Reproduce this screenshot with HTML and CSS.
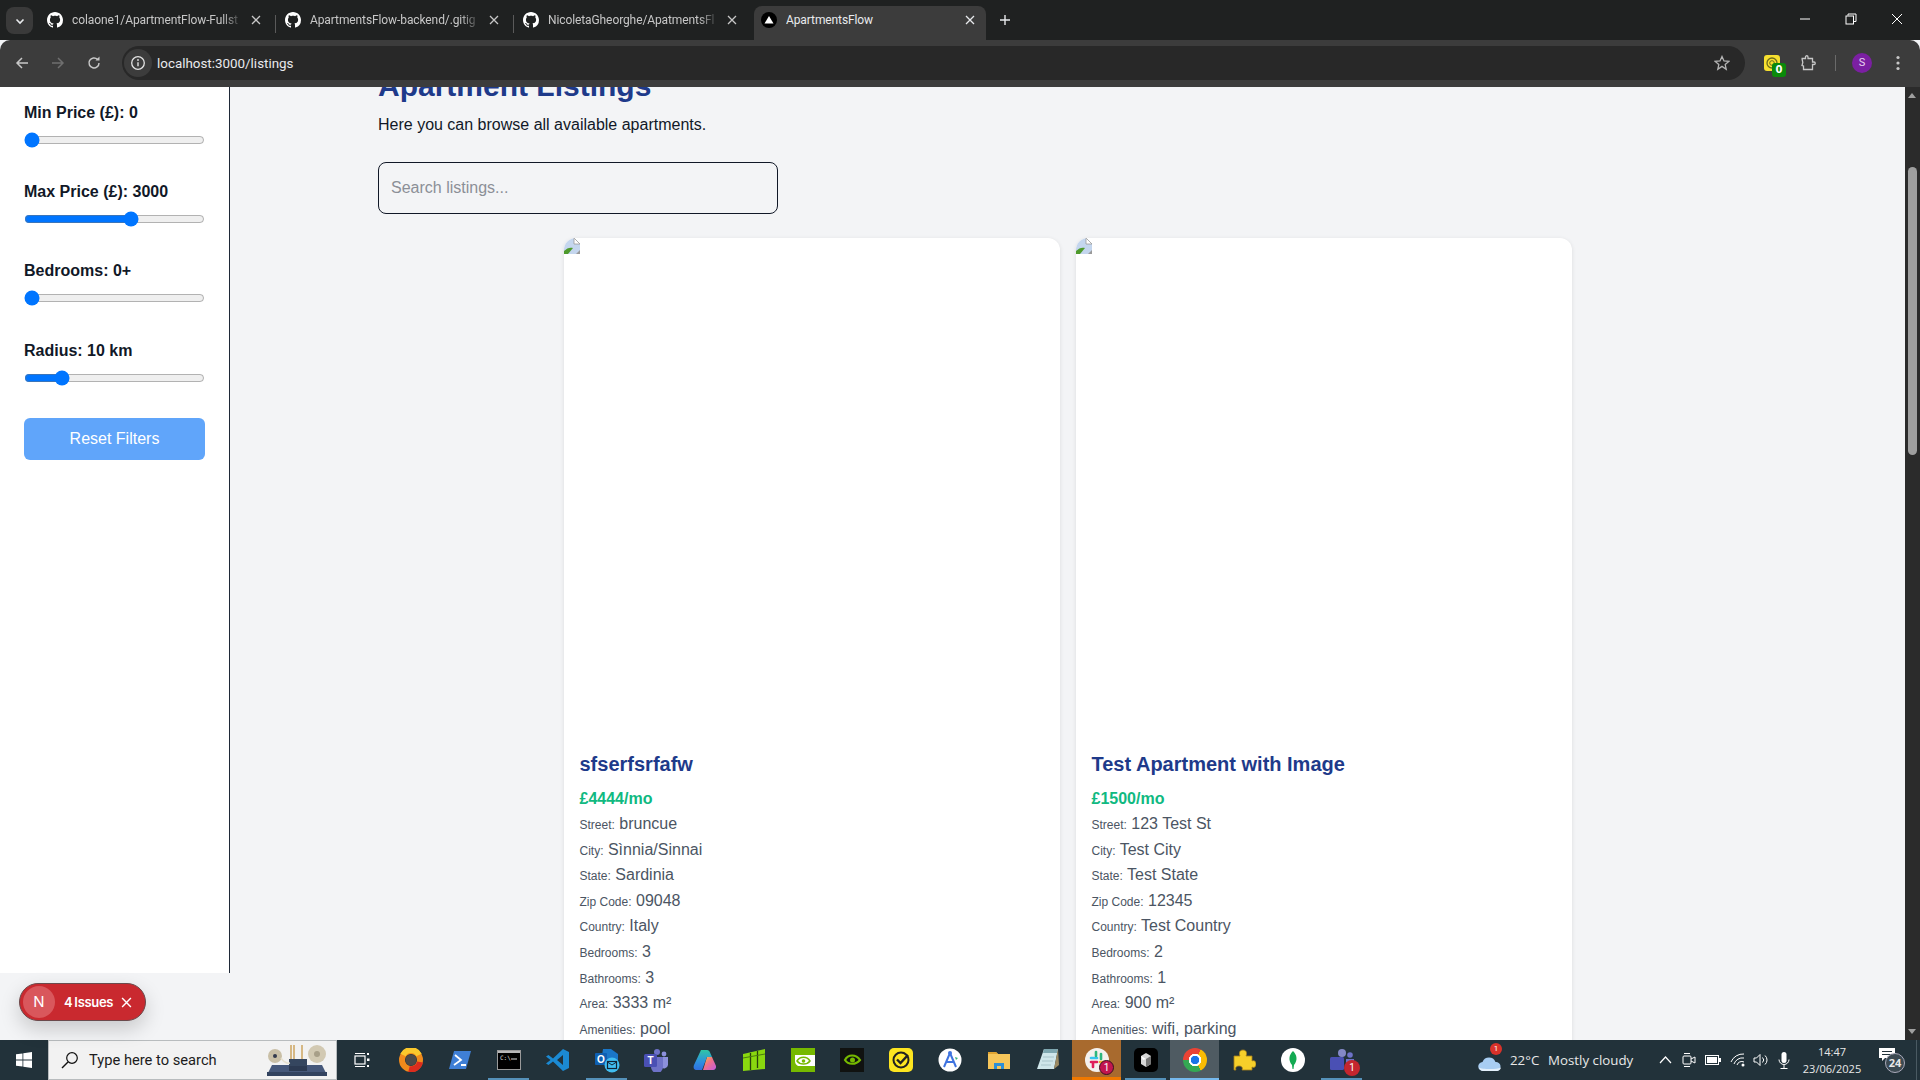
FILE: index.html
```html
<!DOCTYPE html>
<html lang="en">
<head>
    <meta charset="UTF-8">
    <title>ApartmentsFlow</title>
    <link rel="stylesheet" href="styles.css">
</head>
<body>
    <svg class="defs" width="0" height="0">
        <defs>
            <linearGradient id="copilot-a" x1="0" y1="0" x2="0" y2="1"><stop offset="0" stop-color="#2fc6a4"/><stop offset=".6" stop-color="#2d8fe0"/><stop offset="1" stop-color="#2f6fe0"/></linearGradient>
            <linearGradient id="copilot-b" x1="0" y1="0" x2="1" y2="1"><stop offset="0" stop-color="#f6c23c"/><stop offset=".45" stop-color="#f0708a"/><stop offset="1" stop-color="#c05be0"/></linearGradient>
        </defs>
        <symbol id="gh" viewBox="0 0 16 16"><path fill="#fff" d="M8 0C3.58 0 0 3.58 0 8c0 3.54 2.29 6.53 5.47 7.59.4.07.55-.17.55-.38 0-.19-.01-.82-.01-1.49-2.01.37-2.53-.49-2.69-.94-.09-.23-.48-.94-.82-1.13-.28-.15-.68-.52-.01-.53.63-.01 1.08.58 1.23.82.72 1.21 1.87.87 2.33.66.07-.52.28-.87.51-1.07-1.78-.2-3.64-.89-3.64-3.95 0-.87.31-1.59.82-2.15-.08-.2-.36-1.02.08-2.12 0 0 .67-.21 2.2.82.64-.18 1.32-.27 2-.27.68 0 1.36.09 2 .27 1.53-1.04 2.2-.82 2.2-.82.44 1.1.16 1.92.08 2.12.51.56.82 1.27.82 2.15 0 3.07-1.87 3.75-3.65 3.95.29.25.54.73.54 1.48 0 1.07-.01 1.93-.01 2.2 0 .21.15.46.55.38A8.013 8.013 0 0016 8c0-4.42-3.58-8-8-8z"/></symbol>
        <symbol id="x" viewBox="0 0 10 10"><path d="M1 1l8 8M9 1l-8 8" stroke="currentColor" stroke-width="1.3" fill="none"/></symbol>
        <symbol id="broken" viewBox="0 0 16 16">
            <path d="M0 0h10l6 6v10H0z" fill="#c4d6ee"/>
            <path d="M10 0l6 6h-6z" fill="#fff" stroke="#9a9a9a" stroke-width=".8"/>
            <path d="M0 16v-3c3-3 6-4 9-3l-5 6z" fill="#4e9a2c"/>
            <path d="M12 16l4-4v4z" fill="#9a9a9a"/>
        </symbol>
    </svg>

    <div class="tabstrip">
        <button class="tab-search"><svg width="10" height="10" viewBox="0 0 10 10"><path d="M1.5 3.5L5 7l3.5-3.5" stroke="#e8eaed" stroke-width="1.6" fill="none"/></svg></button>
        <div class="tabs">
            <div class="tab">
                <svg class="favicon"><use href="#gh"/></svg>
                <span class="tab-title">colaone1/ApartmentFlow-Fullst</span>
                <svg class="tab-close"><use href="#x"/></svg>
            </div>
            <div class="tab">
                <svg class="favicon"><use href="#gh"/></svg>
                <span class="tab-title">ApartmentsFlow-backend/.gitig</span>
                <svg class="tab-close"><use href="#x"/></svg>
            </div>
            <div class="tab tab-last">
                <svg class="favicon"><use href="#gh"/></svg>
                <span class="tab-title">NicoletaGheorghe/ApatmentsFl</span>
                <svg class="tab-close"><use href="#x"/></svg>
            </div>
            <div class="tab tab-active">
                <svg class="favicon" viewBox="0 0 16 16"><circle cx="8" cy="8" r="8" fill="#000"/><path d="M8 4l4.5 7.5h-9z" fill="#fff"/></svg>
                <span class="tab-title">ApartmentsFlow</span>
                <svg class="tab-close"><use href="#x"/></svg>
            </div>
            <svg class="new-tab" width="12" height="12" viewBox="0 0 12 12"><path d="M6 1v10M1 6h10" stroke="#e8eaed" stroke-width="1.4"/></svg>
        </div>
        <div class="window-controls">
            <svg width="12" height="12" viewBox="0 0 12 12"><path d="M1 6h10" stroke="#fff" stroke-width="1"/></svg>
            <svg width="12" height="12" viewBox="0 0 12 12"><path d="M3 2.5V1h8v7.5H9" stroke="#fff" fill="none"/><rect x="1" y="3" width="7.5" height="8" fill="none" stroke="#fff"/></svg>
            <svg width="12" height="12" viewBox="0 0 12 12"><path d="M1 1l10 10M11 1L1 11" stroke="#fff" stroke-width="1"/></svg>
        </div>
    </div>

    <div class="toolbar">
        <div class="nav-buttons">
            <svg width="16" height="16" viewBox="0 0 16 16"><path d="M14 8H3M8 3L3 8l5 5" stroke="#c7c7c7" stroke-width="1.5" fill="none"/></svg>
            <svg width="16" height="16" viewBox="0 0 16 16"><path d="M2 8h11M8 3l5 5-5 5" stroke="#6f6f6f" stroke-width="1.5" fill="none"/></svg>
            <svg width="16" height="16" viewBox="0 0 16 16"><path d="M13 8a5 5 0 1 1-1.5-3.6" stroke="#c7c7c7" stroke-width="1.5" fill="none"/><path d="M13.5 1.5v4h-4z" fill="#c7c7c7"/></svg>
        </div>
        <div class="omnibox">
            <span class="site-info"><svg width="16" height="16" viewBox="0 0 16 16"><circle cx="8" cy="8" r="6.3" stroke="#e3e3e3" stroke-width="1.3" fill="none"/><path d="M8 7.2v4" stroke="#e3e3e3" stroke-width="1.4"/><circle cx="8" cy="5" r=".9" fill="#e3e3e3"/></svg></span>
            <span class="url">localhost:3000/listings</span>
            <svg class="star" width="16" height="16" viewBox="0 0 16 16"><path d="M8 1.5l2 4.4 4.8.5-3.6 3.2 1 4.7L8 11.4l-4.2 2.9 1-4.7L1.2 6.4l4.8-.5z" stroke="#b5b5b5" stroke-width="1.3" fill="none"/></svg>
        </div>
        <div class="toolbar-actions">
            <span class="ext">
                <svg width="16" height="16" viewBox="0 0 16 16"><rect width="16" height="16" rx="3" fill="#f7e02f"/><circle cx="8" cy="8" r="5" fill="none" stroke="#6d6a1c" stroke-width="1.3"/><circle cx="8" cy="8" r="2.3" fill="none" stroke="#6d6a1c"/></svg>
                <span class="ext-badge">0</span>
            </span>
            <svg class="puzzle" width="16" height="16" viewBox="0 0 16 16"><path d="M1.5 3.5h4V2a1.2 1.2 0 0 1 2.500 0v1.500h4.500V7H14a1.2 1.2 0 0 1 0 2.500h-1.500v5h-9V11l-1.500-.5.8-3-.8-4z" stroke="#c7c7c7" stroke-width="1.3" fill="none"/></svg>
            <span class="toolbar-sep"></span>
            <span class="avatar">S</span>
            <svg class="kebab" width="4" height="16" viewBox="0 0 4 16"><circle cx="2" cy="2.5" r="1.6" fill="#c7c7c7"/><circle cx="2" cy="8" r="1.6" fill="#c7c7c7"/><circle cx="2" cy="13.5" r="1.6" fill="#c7c7c7"/></svg>
        </div>
    </div>

    <div class="viewport">
        <div class="page">
            <aside class="sidebar">
                <div class="filter">
                    <label class="filter-label">Min Price (£): 0</label>
                    <input type="range" min="0" max="5000" value="0">
                </div>
                <div class="filter">
                    <label class="filter-label">Max Price (£): 3000</label>
                    <input type="range" min="0" max="5000" value="3000">
                </div>
                <div class="filter">
                    <label class="filter-label">Bedrooms: 0+</label>
                    <input type="range" min="0" max="10" value="0">
                </div>
                <div class="filter">
                    <label class="filter-label">Radius: 10 km</label>
                    <input type="range" min="1" max="50" value="10">
                </div>
                <button class="reset-btn">Reset Filters</button>
            </aside>

            <main class="main">
                <h1>Apartment Listings</h1>
                <p class="lead">Here you can browse all available apartments.</p>
                <input class="search" type="text" placeholder="Search listings...">

                <div class="cards">
                    <article class="card">
                        <div class="card-img"><svg class="broken" width="16" height="16"><use href="#broken"/></svg></div>
                        <div class="card-body">
                            <h2>sfserfsrfafw</h2>
                            <div class="price">£4444/mo</div>
                            <p class="row"><span>Street:</span> bruncue</p>
                            <p class="row"><span>City:</span> Sìnnia/Sinnai</p>
                            <p class="row"><span>State:</span> Sardinia</p>
                            <p class="row"><span>Zip Code:</span> 09048</p>
                            <p class="row"><span>Country:</span> Italy</p>
                            <p class="row"><span>Bedrooms:</span> 3</p>
                            <p class="row"><span>Bathrooms:</span> 3</p>
                            <p class="row"><span>Area:</span> 3333 m²</p>
                            <p class="row"><span>Amenities:</span> pool</p>
                        </div>
                    </article>
                    <article class="card">
                        <div class="card-img"><svg class="broken" width="16" height="16"><use href="#broken"/></svg></div>
                        <div class="card-body">
                            <h2>Test Apartment with Image</h2>
                            <div class="price">£1500/mo</div>
                            <p class="row"><span>Street:</span> 123 Test St</p>
                            <p class="row"><span>City:</span> Test City</p>
                            <p class="row"><span>State:</span> Test State</p>
                            <p class="row"><span>Zip Code:</span> 12345</p>
                            <p class="row"><span>Country:</span> Test Country</p>
                            <p class="row"><span>Bedrooms:</span> 2</p>
                            <p class="row"><span>Bathrooms:</span> 1</p>
                            <p class="row"><span>Area:</span> 900 m²</p>
                            <p class="row"><span>Amenities:</span> wifi, parking</p>
                        </div>
                    </article>
                </div>
            </main>

            <div class="issues-pill">
                <span class="next-logo">N</span>
                <span class="issues-text">4 Issues</span>
                <svg width="11" height="11"><use href="#x"/></svg>
            </div>
        </div>

        <div class="scrollbar">
            <span class="arrow-up"></span>
            <span class="thumb"></span>
            <span class="arrow-down"></span>
        </div>
    </div>

    <footer class="taskbar">
        <div class="start">
            <svg width="16" height="16" viewBox="0 0 16 16"><path fill="#fff" d="M0 2.3l6.5-.9v6.200H0zM7.3 1.300L16 0v7.600H7.3zM0 8.400h6.500v6.200L0 13.700zM7.3 8.400H16V16l-8.700-1.200z"/></svg>
        </div>
        <div class="task-search">
            <svg width="18" height="18" viewBox="0 0 18 18"><circle cx="11" cy="7" r="5.3" fill="none" stroke="#111" stroke-width="1.2"/><path d="M7 11l-6 6" stroke="#111" stroke-width="1.4"/></svg>
            <span class="task-search-text">Type here to search</span>
            <svg class="machine" width="60" height="32" viewBox="0 0 60 32">
                <path d="M0 31l5-10h50l5 10z" fill="#46587a"/>
                <rect x="0" y="28" width="60" height="4" fill="#33435f"/>
                <rect x="22" y="15" width="18" height="7" fill="#35465f"/>
                <rect x="22" y="22" width="18" height="5" fill="#2c3a52"/>
                <path d="M24 15V1M27 15V1M35 15V1" stroke="#d6b884" stroke-width="2"/>
                <circle cx="8" cy="12" r="7" fill="#c9bfa6"/><circle cx="8" cy="12" r="2" fill="#333a4d"/>
                <circle cx="50" cy="10" r="9" fill="#d2c9b2"/><circle cx="50" cy="10" r="3" fill="#a89f88"/>
                <path d="M14 14q4 6 9 5" stroke="#e6e0cf" stroke-width="1.5" fill="none"/>
            </svg>
        </div>
        <div class="task-icons">
            <span class="tb-item"><svg width="16" height="16" viewBox="0 0 16 16"><rect x="1" y="4" width="10" height="8" fill="none" stroke="#fff" stroke-width="1.2"/><path d="M1 1.500h10M1 14.500h10" stroke="#fff" stroke-width="1.2"/><rect x="13" y="1" width="2" height="2" fill="#fff"/><rect x="13" y="6.500" width="2.500" height="2.500" fill="#fff"/><rect x="13" y="13" width="2" height="2" fill="#fff"/></svg></span>
            <span class="tb-item"><svg width="24" height="24" viewBox="0 0 24 24"><circle cx="12" cy="12" r="9" fill="none" stroke="#f08a1c" stroke-width="6"/><path d="M4 7a9 9 0 0 1 16 0" fill="none" stroke="#fbc82c" stroke-width="6"/><path d="M10 21a9 9 0 0 0 11-7" fill="none" stroke="#dc2c1e" stroke-width="6"/><circle cx="12" cy="12" r="5.500" fill="#4d4a48"/></svg></span>
            <span class="tb-item"><svg width="24" height="24" viewBox="0 0 24 24"><path d="M6 3h17l-5 18H1z" fill="#3f7fd6"/><path d="M7 7l6 5-7 5M13 17h5" stroke="#fff" stroke-width="1.800" fill="none"/></svg></span>
            <span class="tb-item running"><svg width="24" height="20" viewBox="0 0 24 20"><rect x=".5" y=".5" width="23" height="19" fill="#000" stroke="#9a9a9a"/><rect x="1" y="1" width="22" height="2" fill="#b9b9b9"/><text x="3" y="10" class="cmd-text">C:\</text><path d="M14 9h6" stroke="#ddd"/></svg></span>
            <span class="tb-item"><svg width="24" height="24" viewBox="0 0 24 24"><path d="M17 1l6 3v16l-6 3-10-9.500L2.500 17 0 15.500 4.500 12 0 8.500 2.500 7 7 10.500zM17 7l-6 5 6 5z" fill="#1b8ad3"/></svg></span>
            <span class="tb-item running"><svg width="26" height="26" viewBox="0 0 26 26"><path d="M9 2h8l7 5v8H7z" fill="#1a76c7"/><rect x="1" y="6" width="12" height="12" rx="1" fill="#0f5fb1"/><text x="7" y="15.500" class="icon-letter">O</text><circle cx="18" cy="18" r="7.500" fill="#41bdf0"/><rect x="13.500" y="14.500" width="9" height="7" fill="none" stroke="#123" stroke-width="1.200"/><path d="M13.500 15l4.500 3 4.500-3" stroke="#123" fill="none"/></svg></span>
            <span class="tb-item"><svg width="26" height="24" viewBox="0 0 26 24"><circle cx="14" cy="4" r="3" fill="#6e72c8"/><circle cx="21" cy="6" r="2.400" fill="#8c90dc"/><path d="M18 9h7v8a4 4 0 0 1-7 2z" fill="#8c90dc"/><path d="M8 9h12v10a5 5 0 0 1-12 0z" fill="#6e72c8"/><rect x="1" y="6" width="13" height="13" rx="1.500" fill="#4a50b4"/><text x="7.500" y="16" class="icon-letter">T</text></svg></span>
            <span class="tb-item"><svg width="24" height="24" viewBox="0 0 24 24"><path d="M14 9h5l4 9c.5 2-1 4-3 4H10z" fill="url(#copilot-b)"/><path d="M8 2h6c1.500 0 2.500 1 3 2.500L19 9h-5l-5 13H4c-3 0-4-2-3-5z" fill="url(#copilot-a)"/></svg></span>
            <span class="tb-item"><svg width="24" height="24" viewBox="0 0 24 24"><path d="M1 6l22-5v20L1 23z" fill="#8ad80f"/><path d="M8.500 5v17M15.500 3v17" stroke="#28430c" stroke-width="1.300"/><path d="M1 10l22-4" stroke="#4c7a10" stroke-width="1"/></svg></span>
            <span class="tb-item"><svg width="24" height="24" viewBox="0 0 24 24"><rect width="24" height="24" fill="#76b900"/><path d="M4 7h20v11H7c-2-1-3-3-3-5z" fill="#fff"/><path d="M6 13c3-5 10-5 13 0-3 4-10 4-13 0z" fill="none" stroke="#76b900" stroke-width="1.500"/><circle cx="12.500" cy="13" r="1.800" fill="#76b900"/></svg></span>
            <span class="tb-item"><svg width="24" height="24" viewBox="0 0 24 24"><rect width="24" height="24" fill="#101210"/><path d="M5 12c3-6 11-6 15 0-4 5-12 5-15 0z" fill="none" stroke="#76b900" stroke-width="2.200"/><circle cx="12.500" cy="12" r="2.500" fill="#76b900"/></svg></span>
            <span class="tb-item"><svg width="24" height="24" viewBox="0 0 24 24"><rect width="24" height="24" rx="5" fill="#fde520"/><circle cx="12" cy="12" r="7.500" fill="none" stroke="#222" stroke-width="2"/><path d="M8 11.500l3.500 3.500L19 7" fill="none" stroke="#222" stroke-width="2.400"/></svg></span>
            <span class="tb-item"><svg width="24" height="24" viewBox="0 0 24 24"><circle cx="12" cy="12" r="11.500" fill="#fff"/><path d="M12 5l-6 14M12 5l6 14M8 14h8" stroke="#3f74e0" stroke-width="2" fill="none"/><circle cx="12" cy="5" r="2" fill="#3f74e0"/><path d="M17 9l3 1-2 2z" fill="#3ab47a"/></svg></span>
            <span class="tb-item"><svg width="24" height="22" viewBox="0 0 24 22"><path d="M1 3h8l2 2h12v15H1z" fill="#f6c65a"/><path d="M1 3h8l2 2H1z" fill="#e0a431"/><path d="M7 20v-6h10v6h-3v-3h-4v3z" fill="#2d8fd6"/></svg></span>
            <span class="tb-item"><svg width="24" height="24" viewBox="0 0 24 24"><path d="M8 1h14l-4 20H1z" fill="#cfe6ea"/><path d="M8 1h14l-1 4H7z" fill="#7ea7b0"/><path d="M7 9h11M6 13h11M5 17h10" stroke="#a8c4ca"/><path d="M18 21l4-20 1 16z" fill="#9b8a63"/></svg></span>
            <span class="tb-item tb-slack"><svg width="24" height="24" viewBox="0 0 24 24"><circle cx="12" cy="12" r="12" fill="#f4f1ee"/><path d="M6 10h6" stroke="#36c5f0" stroke-width="2.600" stroke-linecap="round"/><path d="M11 4v4" stroke="#2eb67d" stroke-width="2.600" stroke-linecap="round"/><path d="M16 6v5" stroke="#2eb67d" stroke-width="2.600" stroke-linecap="round"/><path d="M8 15v4" stroke="#e01e5a" stroke-width="2.600" stroke-linecap="round"/><path d="M6 14h6" stroke="#e01e5a" stroke-width="2.600" stroke-linecap="round"/><path d="M15 14h4" stroke="#ecb22e" stroke-width="2.600" stroke-linecap="round"/></svg><span class="tb-badge badge-slack">1</span></span>
            <span class="tb-item running"><svg width="24" height="24" viewBox="0 0 24 24"><rect width="24" height="24" rx="5" fill="#000"/><path d="M7 8l5-3 5 3v8l-5 3-5-3z" fill="#d8d8d8"/><path d="M12 11l5-3v8l-5 3z" fill="#777"/><path d="M7 8l5 3-3 1z" fill="#fff"/></svg></span>
            <span class="tb-item tb-chrome running"><span class="chrome-icon"></span></span>
            <span class="tb-item"><svg width="24" height="24" viewBox="0 0 24 24"><path d="M2 8h6c-1-2-1-6 3-6s4 4 3 6h6v5c2-1 4 0 4 3s-2 4-4 3v3H10c1-2 0-4-3-4s-4 2-3 4H2z" fill="#f6cf2a" stroke="#a8821a" stroke-width=".8"/></svg></span>
            <span class="tb-item"><svg width="24" height="24" viewBox="0 0 24 24"><circle cx="12" cy="12" r="12" fill="#fff"/><path d="M12 3c4 4 5 9 1 14l-.5 4h-1l-.5-4C7 12 8 7 12 3z" fill="#13aa52"/></svg></span>
            <span class="tb-item running"><svg width="26" height="24" viewBox="0 0 26 24"><circle cx="13" cy="5" r="4" fill="#8489c8"/><circle cx="21" cy="7" r="2.800" fill="#6e72c8"/><path d="M17 11h8v7a4 4 0 0 1-8 1z" fill="#6e72c8"/><rect x="1" y="9" width="14" height="13" rx="1.500" fill="#4a50b4"/></svg><span class="tb-badge badge-teams">1</span></span>
        </div>
        <div class="tray">
            <span class="weather">
                <svg width="24" height="20" viewBox="0 0 24 20"><path d="M5 19a4.500 4.500 0 0 1-.5-9 7 7 0 0 1 13 0 4.500 4.500 0 0 1 1 9z" fill="#a8cdf2"/><path d="M1 15.500c3 2 18 2 22 0-.5 2-2 3.500-4 3.500H5c-2 0-3.500-1.500-4-3.500z" fill="#e4f0fb"/></svg>
                <span class="weather-badge">1</span>
            </span>
            <span class="weather-temp">22°C</span>
            <span class="weather-text">Mostly cloudy</span>
            <svg class="tray-ico chevron" width="13" height="8" viewBox="0 0 13 8"><path d="M1 7l5.500-6L12 7" stroke="#fff" stroke-width="1.200" fill="none"/></svg>
            <svg class="tray-ico cam" width="14" height="16" viewBox="0 0 14 16"><rect x="1" y="4" width="8" height="8" rx="1" fill="none" stroke="#fff"/><path d="M9 7l4-2v6l-4-2M2 1.500h6M2 14.500h6" stroke="#fff" fill="none"/></svg>
            <svg class="tray-ico" width="16" height="10" viewBox="0 0 16 10"><rect x=".5" y=".5" width="13" height="9" fill="none" stroke="#fff"/><rect x="2" y="2" width="10" height="6" fill="#fff"/><rect x="14" y="3" width="2" height="4" fill="#fff"/></svg>
            <svg class="tray-ico speaker-gap" width="16" height="14" viewBox="0 0 16 14"><path d="M1 9a13 13 0 0 1 13-8M4 11a9 9 0 0 1 10-6M7 12a5 5 0 0 1 7-3" stroke="#fff" fill="none"/><circle cx="13" cy="12" r="1.500" fill="#fff"/></svg>
            <svg class="tray-ico speaker" width="16" height="14" viewBox="0 0 16 14"><path d="M1 5h2.500L7 1.500v11L3.500 9H1z" fill="none" stroke="#fff"/><path d="M9.500 4.500a3.500 3.500 0 0 1 0 5M12 2.500a6 6 0 0 1 0 9" fill="none" stroke="#fff"/></svg>
            <svg class="tray-ico mic" width="12" height="17" viewBox="0 0 12 17"><rect x="3.500" y="0" width="5" height="11" rx="2.500" fill="#fff"/><path d="M1 7.500a5 5 0 0 0 10 0M6 13v3M2.500 16.500h7" stroke="#fff" fill="none"/></svg>
            <div class="clock">
                <span>14:47</span>
                <span>23/06/2025</span>
            </div>
            <span class="notif">
                <svg width="16" height="14" viewBox="0 0 16 14"><path d="M0 0h16v10H6l-3 3v-3H0z" fill="#fff"/><path d="M3 3.500h10M3 6.500h10" stroke="#22323a"/></svg>
                <span class="notif-count">24</span>
            </span>
        </div>
    </footer>
</body>
</html>
```

FILE: styles.css
```css
* { box-sizing: border-box; }

body {
    margin: 0;
    height: 100vh;
    display: flex;
    flex-direction: column;
    overflow: hidden;
    font-family: "Liberation Sans", Arial, sans-serif;
    background: #f3f4f6;
    color: #111827;
}
.defs { position: absolute; }

/* browser chrome */
.tabstrip {
    height: 40px;
    flex: none;
    display: flex;
    background: #1f2121;
    font-family: Roboto, sans-serif;
    font-size: 12px;
    letter-spacing: -0.1px;
    color: #c7c7c7;
}
.tab-search {
    width: 27px;
    height: 27px;
    margin: 7px 7px 0 6px;
    padding: 0;
    border: none;
    border-radius: 8px;
    background: #3a3a3a;
    display: flex;
    align-items: center;
    justify-content: center;
}
.tabs {
    flex: 1;
    display: flex;
    gap: 6px;
    align-items: flex-end;
}
.tab {
    position: relative;
    width: 232px;
    height: 34px;
    display: flex;
    align-items: center;
    padding: 0 10px 6px 7px;
}
.tab::after {
    content: "";
    position: absolute;
    right: -4px;
    top: 9px;
    height: 18px;
    width: 1px;
    background: #5a5a5a;
}
.tab-last::after, .tab-active::after { display: none; }
.favicon { width: 16px; height: 16px; flex: none; }
.tab-title {
    width: 171px;
    margin-left: 9px;
    white-space: nowrap;
    overflow: hidden;
    -webkit-mask-image: linear-gradient(to right, #000 88%, transparent 100%);
}
.tab-close { width: 10px; height: 10px; flex: none; margin-left: 8px; color: #c7c7c7; }
.tab-active {
    background: #3c3c3c;
    border-radius: 8px 8px 0 0;
    color: #e8eaed;
}
.tab-active .tab-title { -webkit-mask-image: none; }
.tab-active .tab-close { color: #e8eaed; }
.new-tab { margin: 0 0 14px 7px; }
.window-controls {
    display: flex;
    align-items: center;
    height: 38px;
}
.window-controls svg { margin: 0 17px; }

.toolbar {
    height: 47px;
    flex: none;
    display: flex;
    align-items: flex-start;
    background: #3c3c3c;
    border-radius: 10px 10px 0 0;
    padding-top: 6px;
}
.nav-buttons {
    display: flex;
    gap: 20px;
    padding: 9px 0 0 14px;
    width: 122px;
}
.omnibox {
    width: 1623px;
    height: 34px;
    display: flex;
    align-items: center;
    background: #282828;
    border-radius: 17px;
    font-family: Roboto, sans-serif;
    font-size: 13.4px;
    color: #e8eaed;
    padding: 0 15px 0 2px;
}
.site-info {
    width: 28px;
    height: 28px;
    border-radius: 50%;
    background: #3c3c3c;
    display: flex;
    align-items: center;
    justify-content: center;
}
.url { margin-left: 5px; flex: 1; }
.toolbar-actions {
    flex: 1;
    display: flex;
    align-items: center;
    height: 34px;
    padding-left: 19px;
}
.ext { position: relative; width: 16px; height: 16px; }
.ext-badge {
    position: absolute;
    left: 8px;
    top: 8px;
    width: 14px;
    height: 14px;
    border-radius: 3px;
    background: #0a8a0a;
    color: #fff;
    font: bold 10px/14px "DejaVu Sans", sans-serif;
    text-align: center;
}
.ext svg { display: block; }
.puzzle { margin-left: 20px; }
.toolbar-sep { width: 1px; height: 16px; background: #6a6a6a; margin-left: 19px; }
.avatar {
    width: 20px;
    height: 20px;
    margin-left: 16px;
    border-radius: 50%;
    background: #7b1fa2;
    color: #e8d4f0;
    font: 11px/20px Roboto, sans-serif;
    text-align: center;
}
.kebab { margin-left: 24px; }

/* page area */
.viewport {
    flex: 1;
    min-height: 0;
    display: flex;
}
.page {
    position: relative;
    flex: 1;
    min-width: 0;
    display: flex;
    background: #f3f4f6;
}
.sidebar {
    width: 230px;
    flex: none;
    height: 886px;
    padding: 14px 24px 0;
    background: #fff;
    border-right: 1px solid #1f2937;
}
.filter { margin-bottom: 32.2px; }
.filter-label {
    display: block;
    font-size: 16px;
    font-weight: bold;
    line-height: 24px;
    margin-bottom: 7px;
}
.filter input {
    display: block;
    width: 181px;
    margin: 2px 0;
}
.reset-btn {
    width: 181px;
    height: 42px;
    border: none;
    border-radius: 6px;
    background: #60a5fa;
    color: #fff;
    font: 16px "Liberation Sans", Arial, sans-serif;
}

.main {
    flex: 1;
    min-width: 0;
    padding: 0 148px;
    overflow: hidden;
}
.main h1 {
    margin: -19px 0 9px;
    font-size: 30px;
    line-height: 36px;
    color: #1e3a8a;
}
.lead {
    margin: 0 0 25px;
    font-size: 16px;
    line-height: 24px;
}
.search {
    display: block;
    width: 400px;
    height: 52px;
    margin-bottom: 24px;
    padding: 0 12px;
    border: 1px solid #111827;
    border-radius: 8px;
    background: transparent;
    font: 16px "Liberation Sans", Arial, sans-serif;
}
.search::placeholder { color: #8b8f97; }
.cards {
    display: flex;
    justify-content: center;
    gap: 16px;
    margin: 0 -148px;
}
.card {
    width: 496px;
    flex: none;
    background: #fff;
    border-radius: 12px;
    overflow: hidden;
    box-shadow: 0 1px 4px rgba(0,0,0,0.1);
}
.card-img { height: 496px; }
.broken { display: block; }
.card-body { padding: 16px; }
.card-body h2 {
    margin: 0 0 8.5px;
    font-size: 20px;
    line-height: 28px;
    color: #1e3a8a;
}
.price {
    margin-bottom: 0.5px;
    font-size: 16px;
    font-weight: bold;
    line-height: 24px;
    color: #10b981;
}
.row {
    margin: 0;
    font-size: 16px;
    line-height: 25.6px;
    color: #4b5563;
}
.row span { font-size: 12px; line-height: 1; }

.issues-pill {
    position: absolute;
    left: 19px;
    top: 896px;
    width: 127px;
    height: 38px;
    display: flex;
    align-items: center;
    padding: 0 13px 0 3px;
    border: 1px solid #6b4a4c;
    border-radius: 19px;
    background: #c9292f;
    color: #fff;
    box-shadow: 0 8px 20px rgba(0,0,0,0.18);
}
.next-logo {
    width: 32px;
    height: 32px;
    border-radius: 50%;
    background: #d9575c;
    font: 15px/32px Inter, sans-serif;
    text-align: center;
}
.issues-text {
    flex: 1;
    margin-left: 9px;
    font: 600 13px Inter, sans-serif;
    letter-spacing: -0.3px;
    word-spacing: -1px;
    white-space: nowrap;
}

.scrollbar {
    position: relative;
    width: 15px;
    flex: none;
    background: #2b2b2b;
}
.arrow-up, .arrow-down {
    position: absolute;
    left: 3px;
    width: 0;
    height: 0;
    border-left: 4.5px solid transparent;
    border-right: 4.5px solid transparent;
}
.arrow-up { top: 6px; border-bottom: 5px solid #9f9f9f; }
.arrow-down { bottom: 6px; border-top: 5px solid #9f9f9f; }
.thumb {
    position: absolute;
    left: 3px;
    top: 80px;
    width: 9px;
    height: 288px;
    border-radius: 5px;
    background: #9f9f9f;
}

/* windows taskbar */
.taskbar {
    height: 40px;
    flex: none;
    display: flex;
    background: #22323a;
    font-family: "Open Sans", sans-serif;
    color: #fff;
}
.start {
    width: 48px;
    flex: none;
    display: flex;
    align-items: center;
    justify-content: center;
}
.task-search {
    width: 289px;
    flex: none;
    display: flex;
    align-items: center;
    padding-left: 12px;
    background: #f2f2f2;
    border: 1px solid #b8bcbe;
    color: #1c1c1c;
    font-family: Roboto, sans-serif;
    font-size: 14.7px;
}
.task-search-text { margin-left: 10px; flex: 1; }
.machine { margin-right: 9px; }
.task-icons { display: flex; flex: none; }
.tb-item {
    position: relative;
    width: 49px;
    height: 40px;
    display: flex;
    align-items: center;
    justify-content: center;
}
.tb-item.running::after, .tb-slack::after {
    content: "";
    position: absolute;
    left: 4px;
    right: 4px;
    bottom: 0;
    height: 2px;
    background: #5591b9;
}
.tb-slack { background: #a86a2e; }
.tb-slack::after { left: 0; right: 0; height: 3px; background: #f07800; }
.tb-chrome { background: #4f5b62; }
.tb-chrome::after { left: 0 !important; right: 0 !important; background: #76b9ed !important; }
.chrome-icon {
    width: 24px;
    height: 24px;
    border-radius: 50%;
    background:
        radial-gradient(circle, #1a73e8 0 4px, #fff 4.5px 6px, transparent 6.5px),
        conic-gradient(#ea4335 0 30deg, #fbbc04 30deg 150deg, #34a853 150deg 270deg, #ea4335 270deg);
}
.cmd-text { font: 6px "DejaVu Sans Mono", monospace; fill: #ddd; }
.icon-letter { font: bold 10px "Liberation Sans", sans-serif; fill: #fff; text-anchor: middle; }
.tb-badge {
    position: absolute;
    width: 15px;
    height: 15px;
    border-radius: 50%;
    color: #fff;
    font: 10px/15px Roboto, sans-serif;
    text-align: center;
}
.badge-slack { right: 7px; bottom: 5px; background: #c2154f; border: 1px solid #3a1020; line-height: 13px; }
.badge-teams { right: 6px; bottom: 4px; width: 16px; height: 16px; line-height: 16px; background: #c4262e; }

.tray {
    flex: 1;
    min-width: 0;
    display: flex;
    align-items: center;
    margin-right: 3px;
    border-right: 1px solid #4a5a62;
    font-size: 13.3px;
    color: #e8e8e8;
    padding-left: 112px;
}
.tray svg { flex: none; }
.weather { position: relative; display: block; height: 20px; margin-top: 4px; }
.weather-badge {
    position: absolute;
    left: 12px;
    top: -9px;
    width: 12px;
    height: 12px;
    border-radius: 50%;
    background: #d8322a;
    color: #fff;
    font: 8px/12px Roboto, sans-serif;
    text-align: center;
}
.weather-temp { margin-left: 8px; width: 38px; flex: none; }
.weather-text { width: 111px; flex: none; white-space: nowrap; }
.tray-ico { margin-right: 9px; }
.chevron { margin-right: 10px; }
.speaker-gap { margin-right: 7px; }
.speaker { margin-right: 9px; }
.mic { margin-right: 7px; }
.clock {
    display: flex;
    flex-direction: column;
    align-items: center;
    width: 70px;
    flex: none;
    font-size: 11px;
    line-height: 17px;
}
.notif { position: relative; display: block; height: 14px; margin-left: 12px; margin-top: -10px; }
.notif-count {
    position: absolute;
    left: 6px;
    top: 5px;
    width: 20px;
    height: 20px;
    border-radius: 50%;
    background: #3c4a52;
    border: 1px solid #aab;
    font: bold 11px/18px "Open Sans", sans-serif;
    text-align: center;
}
```
